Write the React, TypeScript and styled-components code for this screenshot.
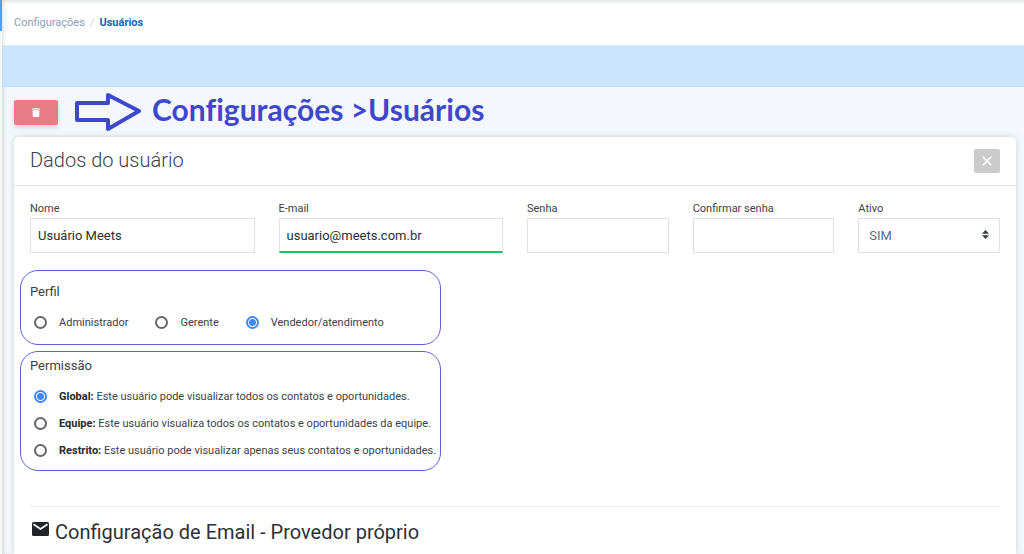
import React from "react";
import styled, { createGlobalStyle } from "styled-components";

const Global = createGlobalStyle`
  * { box-sizing: border-box; }
  html, body { margin: 0; }
  body {
    font-family: Roboto, "Liberation Sans", sans-serif;
    font-size: 11px;
    line-height: 16px;
    color: #3a3f45;
    background: #f4f8fc;
  }
  h1, h2, h3, p { margin: 0; font-weight: 400; }
`;

const Shell = styled.div`
  display: flex;
  min-height: 100vh;
  overflow: hidden;
`;

const Rail = styled.aside`
  flex: none;
  width: 2px;
  background: #f8f9fa;
`;

const RailBrand = styled.div`
  height: 31px;
  background: #42a5f5;
`;

const Main = styled.main`
  flex: 1;
  min-width: 0;
  display: flex;
  flex-direction: column;
  box-shadow: inset 4px 0 4px -2px #d3dade;
`;

const TopBar = styled.nav`
  height: 45px;
  padding: 0 12px;
  display: flex;
  align-items: center;
  gap: 5px;
  background: #fff;
  box-shadow: inset 3px 3px 4px -2px #d8dbde;
`;

const Crumb = styled.a<{ $current?: boolean }>`
  color: ${(p) => (p.$current ? "#1565a8" : "#86a0b8")};
  font-weight: ${(p) => (p.$current ? 700 : 400)};
  text-decoration: none;
`;

const Slash = styled.span`
  color: #d3d7db;
`;

const Banner = styled.div`
  height: 42px;
  border: 1px solid #bfdcf8;
  border-top-color: #dcebf9;
  border-right: 0;
  border-radius: 0 0 0 4px;
  background: #cbe5fe;
`;

const Actions = styled.div`
  height: 50px;
  padding: 0 12px;
  display: flex;
  align-items: center;
`;

const DeleteButton = styled.button`
  width: 44px;
  height: 25px;
  padding: 0;
  display: flex;
  align-items: center;
  justify-content: center;
  border: 0;
  border-radius: 2px;
  background: #e77c86;
  box-shadow: 0 2px 5px #c9ced4;
`;

const Arrow = styled.svg`
  margin-left: 15px;
`;

const PathTitle = styled.h1`
  margin-left: 11px;
  padding-bottom: 6px;
  font: 700 30px/36px Lato, "Open Sans", sans-serif;
  font-variant-ligatures: none;
  color: #3f48cc;
  white-space: nowrap;
`;

const Card = styled.section`
  flex: 1;
  margin: 0 8px 0 12px;
  border-radius: 5px 5px 0 0;
  background: #fff;
  box-shadow: 0 0 6px #c9d0d6;
`;

const CardHeader = styled.header`
  height: 49px;
  padding: 0 16px;
  display: flex;
  align-items: center;
  justify-content: space-between;
  border-bottom: 1px solid #e2e4e6;
`;

const CardTitle = styled.h2`
  font-size: 20px;
  line-height: 24px;
  font-weight: 300;
  padding-bottom: 3px;
`;

const CloseButton = styled.button`
  width: 26px;
  height: 24px;
  padding: 0;
  display: flex;
  align-items: center;
  justify-content: center;
  border: 0;
  border-radius: 2px;
  background: #cbcbcb;
`;

const Form = styled.form`
  padding: 15px 16px 0;
`;

const Fields = styled.div`
  display: grid;
  grid-template-columns: repeat(12, minmax(0, 1fr));
  column-gap: 24px;
`;

const Field = styled.div<{ $span: number }>`
  grid-column: span ${(p) => p.$span};
  display: flex;
  flex-direction: column;
  gap: 1px;
`;

const Input = styled.input<{ $valid?: boolean }>`
  width: 100%;
  height: 35px;
  padding: 0 7px;
  border: 1px solid #dfe1e3;
  border-bottom: ${(p) => (p.$valid ? "2px solid #12c45a" : "1px solid #dfe1e3")};
  border-radius: 0;
  outline: 0;
  background: #fff;
  font: 400 13px/20px Roboto, sans-serif;
  color: #2b2f33;
`;

const SelectWrap = styled.div`
  position: relative;
`;

const Select = styled.select`
  appearance: none;
  display: block;
  width: 100%;
  height: 35px;
  padding: 0 10px;
  border: 1px solid #dfe1e3;
  border-radius: 0;
  background: #fff;
  font: 400 13px/20px Roboto, sans-serif;
  color: #5f6b77;
`;

const Carets = styled.svg`
  position: absolute;
  right: 11px;
  top: 12px;
  pointer-events: none;
`;

const Groups = styled.div`
  margin: 17px 0 0 -10px;
  width: 421px;
  max-width: 100%;
  display: flex;
  flex-direction: column;
  gap: 6px;
`;

const Group = styled.div<{ $tight?: boolean }>`
  padding: ${(p) => (p.$tight ? "4px 9px 11px" : "11px 9px 13px")};
  border: 1px solid #5a62d6;
  border-radius: 18px;
`;

const GroupTitle = styled.h3`
  font-size: 13px;
  line-height: 20px;
`;

const Options = styled.div<{ $row?: boolean }>`
  margin-top: 13px;
  padding-left: 4px;
  display: flex;
  flex-direction: ${(p) => (p.$row ? "row" : "column")};
  gap: ${(p) => (p.$row ? 27 : 11)}px;
`;

const Option = styled.label`
  display: flex;
  align-items: center;
  gap: 12px;
  white-space: nowrap;
`;

const Radio = styled.input`
  appearance: none;
  flex: none;
  width: 13px;
  height: 13px;
  margin: 0 0 1px;
  border: 2px solid #666;
  border-radius: 50%;
  background: #fff;
  &:checked {
    border-color: #4387f6;
    background: radial-gradient(circle, #4387f6 3px, #fff 4px);
  }
`;

const Strong = styled.b`
  font-weight: 700;
  color: #25292d;
`;

const EmailSection = styled.section`
  margin-top: 35px;
  padding-top: 12px;
  display: flex;
  gap: 6px;
  border-top: 1px solid #ececec;
`;

const EmailTitle = styled.h2`
  font-size: 20px;
  line-height: 26px;
  color: #2c3135;
`;

const MailIcon = styled.svg`
  margin: 3px 0 0 2px;
`;

const permissions = [
  ["Global:", "Este usuário pode visualizar todos os contatos e oportunidades."],
  ["Equipe:", "Este usuário visualiza todos os contatos e oportunidades da equipe."],
  ["Restrito:", "Este usuário pode visualizar apenas seus contatos e oportunidades."],
];

const profiles = ["Administrador", "Gerente", "Vendedor/atendimento"];

export default function App() {
  return (
    <>
      <Global />
      <Shell>
        <Rail>
          <RailBrand />
        </Rail>
        <Main>
          <TopBar aria-label="Navegação">
            <Crumb href="#configuracoes">Configurações</Crumb>
            <Slash>/</Slash>
            <Crumb href="#usuarios" $current>
              Usuários
            </Crumb>
          </TopBar>
          <Banner />
          <Actions>
            <DeleteButton type="button" aria-label="Excluir">
              <svg width="8" height="9" viewBox="0 0 8 9" fill="#fff">
                <path d="M0 0.5h2.5L3 0h2l.5.5H8v1H0zM.7 2.2h6.6V8a1 1 0 0 1-1 1H1.700a1 1 0 0 1-1-1z" />
              </svg>
            </DeleteButton>
            <Arrow width="68" height="40" viewBox="0 0 68 40" fill="none" stroke="#3f48cc" strokeWidth="4" strokeLinejoin="round">
              <path d="M4 11h31V3l31 16-31 18v-9H4z" />
            </Arrow>
            <PathTitle>Configurações &gt;Usuários</PathTitle>
          </Actions>
          <Card>
            <CardHeader>
              <CardTitle>Dados do usuário</CardTitle>
              <CloseButton type="button" aria-label="Fechar">
                <svg width="10" height="10" viewBox="0 0 10 10" stroke="#fff" strokeWidth="1.5">
                  <path d="M.7.7l8.600 8.600M9.300.7L.7 9.300" />
                </svg>
              </CloseButton>
            </CardHeader>
            <Form>
              <Fields>
                <Field $span={3}>
                  <label htmlFor="nome">Nome</label>
                  <Input id="nome" defaultValue="Usuário Meets" />
                </Field>
                <Field $span={3}>
                  <label htmlFor="email">E-mail</label>
                  <Input id="email" type="email" $valid defaultValue="usuario@meets.com.br" />
                </Field>
                <Field $span={2}>
                  <label htmlFor="senha">Senha</label>
                  <Input id="senha" type="password" />
                </Field>
                <Field $span={2}>
                  <label htmlFor="confirmar">Confirmar senha</label>
                  <Input id="confirmar" type="password" />
                </Field>
                <Field $span={2}>
                  <label htmlFor="ativo">Ativo</label>
                  <SelectWrap>
                    <Select id="ativo" defaultValue="SIM">
                      <option>SIM</option>
                      <option>NÃO</option>
                    </Select>
                    <Carets width="7" height="9" viewBox="0 0 7 9" fill="#343a40">
                      <path d="M3.500 0L7 3.800H0zM3.500 9L0 5.200h7z" />
                    </Carets>
                  </SelectWrap>
                </Field>
              </Fields>
              <Groups>
                <Group role="radiogroup" aria-labelledby="perfil">
                  <GroupTitle id="perfil">Perfil</GroupTitle>
                  <Options $row>
                    {profiles.map((name, i) => (
                      <Option key={name}>
                        <Radio type="radio" name="perfil" defaultChecked={i === 2} />
                        {name}
                      </Option>
                    ))}
                  </Options>
                </Group>
                <Group $tight role="radiogroup" aria-labelledby="permissao">
                  <GroupTitle id="permissao">Permissão</GroupTitle>
                  <Options>
                    {permissions.map(([name, text], i) => (
                      <Option key={name}>
                        <Radio type="radio" name="permissao" defaultChecked={i === 0} />
                        <span>
                          <Strong>{name}</Strong> {text}
                        </span>
                      </Option>
                    ))}
                  </Options>
                </Group>
              </Groups>
              <EmailSection>
                <MailIcon width="17" height="14" viewBox="0 0 17 14">
                  <rect width="17" height="14" rx="1.500" fill="#212529" />
                  <path d="M1.500 2.300l7 4.600 7-4.600" fill="none" stroke="#fff" strokeWidth="1.700" />
                </MailIcon>
                <EmailTitle>Configuração de Email - Provedor próprio</EmailTitle>
              </EmailSection>
            </Form>
          </Card>
        </Main>
      </Shell>
    </>
  );
}
